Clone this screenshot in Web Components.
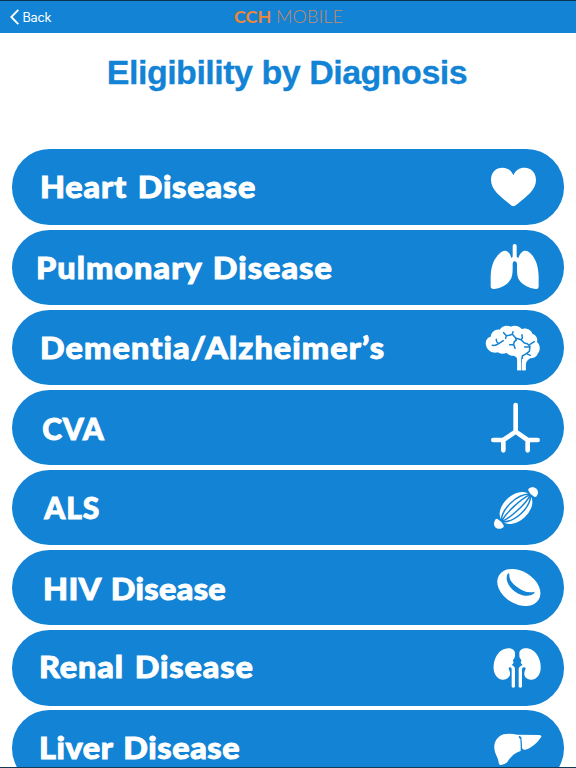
<!DOCTYPE html>
<html lang="en">
<head>
<meta charset="utf-8">
<title>CCH Mobile</title>
<style>
html, body { margin: 0; height: 768px; overflow: hidden; background: #fff; }
</style>
</head>
<body>
<cch-app></cch-app>
<script>
const BLUE = '#1283d5';
const measureCtx = document.createElement('canvas').getContext('2d');

/* Text whose ink spans a given width, by adjusting the letter spacing.
   An optional stretch widens the glyphs themselves; an optional gap widens the spaces. */
class FitText extends HTMLElement {
  connectedCallback() {
    const root = this.attachShadow({ mode: 'open' });
    root.innerHTML = `<style>:host{display:block;white-space:nowrap}span{display:block;transform-origin:0 50%}</style><span></span>`;
    const span = root.querySelector('span');
    const text = this.getAttribute('text');
    const stretch = +(this.getAttribute('stretch') || 1);
    const gap = +(this.getAttribute('gap') || 0);
    span.textContent = text;
    const cs = getComputedStyle(this);
    measureCtx.font = `${cs.fontWeight} ${cs.fontSize} ${cs.fontFamily}`;
    const m = measureCtx.measureText(text);
    const ink = m.actualBoundingBoxRight + m.actualBoundingBoxLeft + gap * (text.split(' ').length - 1);
    span.style.letterSpacing = ((+this.getAttribute('ink') / stretch - ink) / (text.length - 1)).toFixed(3) + 'px';
    span.style.wordSpacing = gap + 'px';
    span.style.marginLeft = (m.actualBoundingBoxLeft * stretch).toFixed(2) + 'px';
    if (stretch !== 1) span.style.transform = `scaleX(${stretch})`;
  }
}
customElements.define('fit-text', FitText);

class NavBar extends HTMLElement {
  connectedCallback() {
    this.attachShadow({ mode: 'open' }).innerHTML = `
<style>
:host{display:grid;grid-template-columns:1fr auto 1fr;align-items:center;height:33.4px;box-sizing:border-box;border-top:1px solid #0b3352;background:${BLUE};color:#fff}
.back{display:flex;align-items:center;gap:4.500px;padding-left:10px;font:12.700px/16px Inter,"Liberation Sans",sans-serif}
.back fit-text{margin-top:1px}
.brand{display:flex;font:17px/20px Lato,sans-serif;color:#f08535;margin-top:-1px}
.cch{font-weight:700;width:43px}
.mob{font-weight:300;color:#c98a62;width:65px}
</style>
<div class="back"><svg width="9" height="16" viewBox="0 0 9 16"><path d="M8.3 .9 1.3 8l7 7.1" fill="none" stroke="#fff" stroke-width="2"/></svg><fit-text text="Back" ink="28"></fit-text></div>
<div class="brand"><fit-text class="cch" text="CCH" ink="36" stretch="1.05"></fit-text><fit-text class="mob" text="MOBILE" ink="65" stretch="1.06"></fit-text></div>`;
  }
}
customElements.define('nav-bar', NavBar);

class DiagnosisRow extends HTMLElement {
  connectedCallback() {
    const a = n => this.getAttribute(n);
    const short = a('label').length < 4;
    this.attachShadow({ mode: 'open' }).innerHTML = `
<style>
:host{display:flex;justify-content:space-between;align-items:flex-start;flex:none;height:75.3px;border-radius:37.6px;background:${BLUE};color:#fff;overflow:hidden}
fit-text{font:900 30px/36px Lato,sans-serif;-webkit-text-stroke:.9px #fff;padding:${a('top')}px 0 0 ${+a('left') + (short ? 0 : .9)}px}
::slotted(svg){display:block;width:88px;height:75.33px;flex:none}
</style><fit-text text="${a('label')}" ink="${a('ink') - .6}" stretch="${short ? 1 : 1.08}" gap="2"></fit-text><slot></slot>`;
  }
}
customElements.define('diagnosis-row', DiagnosisRow);

class CchApp extends HTMLElement {
  connectedCallback() {
    const w = 'fill="#fff"', b = `fill="none" stroke="${BLUE}" stroke-linecap="round" stroke-linejoin="round"`;
    const rows = [
      ['Heart Disease', 28.8, 213.7, 19, 13, `<path ${w} d="M112 185C109 185 104 181 97 175C73 154 45 136 45 105C45 83 60 69 79 69C94 69 106 77 112 92C118 77 130 69 146 69C166 69 180 84 180 106C180 137 151 155 127 176C120 182 115 185 112 185Z"/>`],
      ['Pulmonary Disease', 25.1, 295, 19.5, 14, `<path ${w} d="M110 62Q110 56 116 56Q122 56 122 62V94L127 98C132 84 139 76 147 76C155 76 163 82 171 93C182 108 188 130 188 157V184Q188 192 179 191C158 189 140 179 130 165C124 157 123 146 123 130V115Q122 108 116 108Q110 108 110 115V130C110 146 108 157 102 165C93 179 76 189 55 191Q44 192 44 183V157C44 130 50 109 62 94C70 83 78 77 86 76C94 75 102 83 106 98L110 94Z"/>`],
      ['Dementia/Alzheimer’s', 29.1, 342.7, 19.7, 15, `<path ${w} d="M30 121C27 108 33 97 44 95C46 81 57 72 71 74C78 62 93 59 104 65C116 59 131 63 137 72C150 67 166 74 169 86C181 90 186 101 183 111C193 119 194 136 186 145C183 155 174 160 163 160C153 165 149 173 149 185V196H137V158H135V196H124V166C124 158 120 154 113 152C104 153 96 149 92 144C82 148 72 147 66 142C53 147 34 139 30 121Z"/><path ${b} stroke-width="4.5" d="M49 121Q58 123 68 116L82 107M67 116Q60 110 61 103M83 83L91 92L100 91L109 88L111 80M91 92L89 100M109 88L119 99L120 105M119 99L135 104L139 100L138 89M135 104L145 114L154 116L162 124L160 139L151 146L139 153V170M162 118L175 110M146 126H160M121 105Q113 109 113 118L117 130M101 119H111M151 146L163 151"/><path ${w} d="M124 160H135V196H124ZM138 162Q148 158 149 170V196H138Z"/>`],
      ['CVA', 31, 62, 19.9, 15, `<path fill="none" stroke="#fff" stroke-width="14" stroke-linecap="round" stroke-linejoin="round" d="M119 60V140L82 165H52M119 140L155 165H185M82 165V196M155 165V196"/>`],
      ['ALS', 31, 56, 18.8, 15, `<g transform="translate(120 129) rotate(-43)"><ellipse ${w} rx="57" ry="38"/><path ${b} stroke-width="4.5" d="M-58 -3C-30 -28 30 -28 58 -3M-58 -1C-27 -10 27 -10 58 -1M-58 1C-27 11 27 11 58 1M-58 3C-30 29 30 29 58 3"/><path fill="${BLUE}" d="M-66 -18Q-46 0-66 18ZM66 -18Q46 0 66 18Z"/><path ${w} d="M63 -14Q58 0 63 14Q67 19 74 15C88 9 88 -9 74 -15Q67 -19 63 -14ZM-63 -14Q-58 0 -63 14Q-67 19 -74 15C-88 9 -88 -9 -74 -15Q-67 -19 -63 -14Z"/></g>`],
      ['HIV Disease', 31.5, 182.3, 19.6, 15, `<ellipse ${w} cx="128.500" cy="127.500" rx="70" ry="49" transform="rotate(32 128.500 127.500)"/><path fill="${BLUE}" d="M95 86C89 99 92 114 105 129C121 147 143 156 164 151Q173 149 177 140C155 145 139 138 122 125C106 113 99 103 100 87Q98 83 95 86Z"/>`],
      ['Renal Disease', 27.6, 212.3, 18, 15, `<path ${w} d="M117 87C118 76 108 70 97 70C70 70 50 101 53 133C55 153 68 165 82 164C96 163 104 153 102 143C101 137 98 133 98 129C101 125 106 126 107 132V185Q112 191 117 185V132C117 126 114 123 107 120Q113 116 113 112C110 109 110 105 114 101Q118 97 117 87Z"/><path ${w} d="M130 87C129 76 139 70 150 70C177 70 197 101 194 133C192 153 179 165 165 164C151 163 143 153 145 143C146 137 149 133 149 129C146 125 139 126 138 132V185Q133 191 128 185V132C128 126 133 123 140 120Q134 116 134 112C137 109 137 105 133 101Q129 97 130 87Z"/>`],
      ['Liver Disease', 27.6, 199.6, 18.6, 31, `<path ${w} d="M55 146C53 127 65 109 83 104Q101 100 124 105L190 106Q199 107 195 113C184 130 166 146 148 150Q139 151 138 144L136 117L134 154C117 159 106 169 94 187Q84 197 73 196Q69 195 68 189C66 171 56 164 55 146Z"/><path fill="${BLUE}" d="M129 108L136 112L138 147L135 153L133 119L128 113Z"/>`]
    ];
    this.attachShadow({ mode: 'open' }).innerHTML = `
<style>
:host{display:flex;flex-direction:column;width:576px;height:768px;overflow:hidden;box-sizing:border-box;border-bottom:1px solid #123b59;background:#fff}
nav-bar{flex:none}
h1{display:flex;justify-content:center;margin:0;height:116.050px;flex:none;box-sizing:border-box;padding-top:18.600px;color:${BLUE};font:700 34px/40px "Liberation Sans",Arial,sans-serif}
h1 fit-text{-webkit-text-stroke:.3px ${BLUE}}
main{display:flex;flex-direction:column;gap:4.850px;padding:0 12.300px}
</style>
<nav-bar></nav-bar>
<h1><fit-text text="Eligibility by Diagnosis" ink="358"></fit-text></h1>
<main>${rows.map(([label, left, ink, top, y, art]) =>
  `<diagnosis-row label="${label}" left="${left}" ink="${ink}" top="${top}"><svg viewBox="0 ${y} 264 226" aria-hidden="true">${art}</svg></diagnosis-row>`).join('')}</main>`;
  }
}
customElements.define('cch-app', CchApp);
</script>
</body>
</html>
